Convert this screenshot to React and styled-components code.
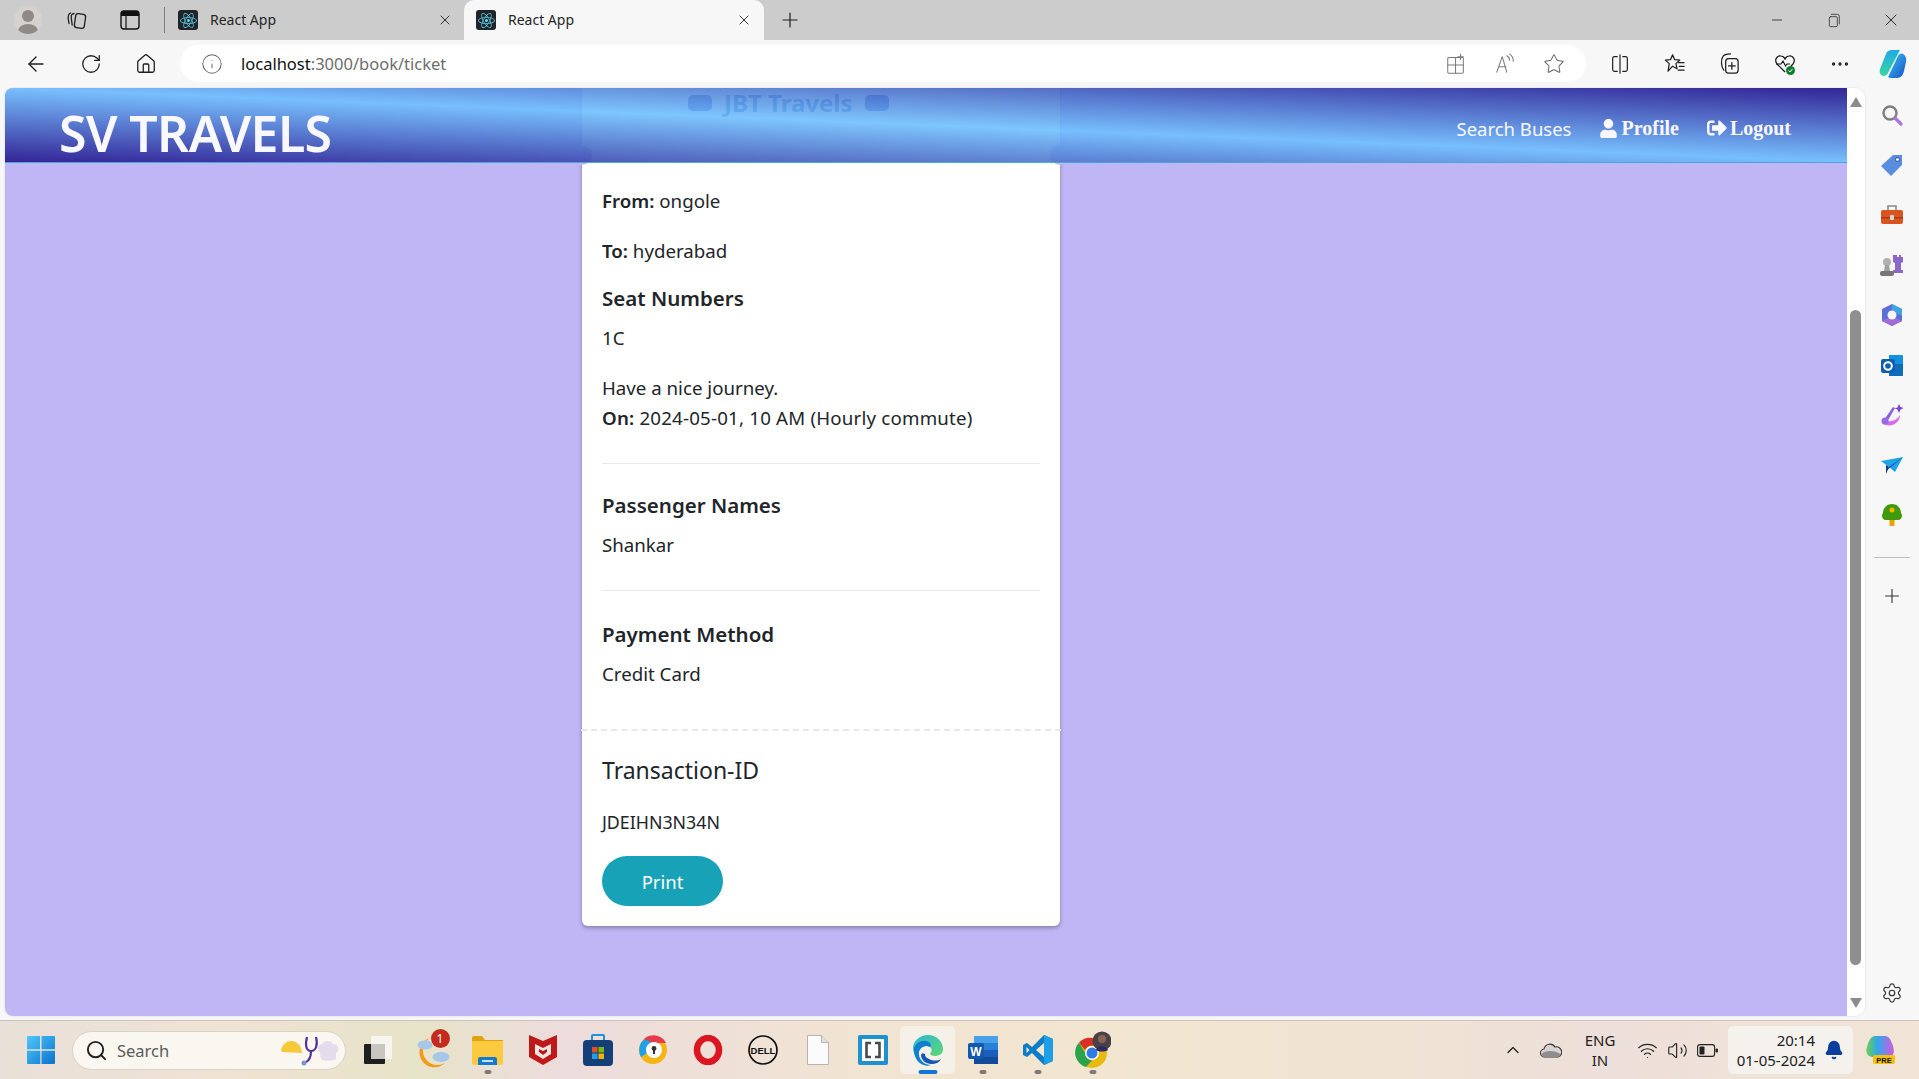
import styled, { createGlobalStyle } from "styled-components";
import { FaReact, FaUser, FaSignOutAlt } from "react-icons/fa";
import {
  ArrowLeft,
  RotateCw,
  Home,
  Info,
  Star,
  Plus,
  Minus,
  X,
  MoreHorizontal,
  Search as SearchGlyph,
  Settings,
  ChevronUp,
  Wifi,
  Volume2,
  Bell,
} from "lucide-react";

const SANS = `"Noto Sans", "Open Sans", sans-serif`;
const PAGE_BG = "#c0b6f5";

const Global = createGlobalStyle`
  html, body { margin: 0; padding: 0; overflow: hidden; }
  body { font-family: ${SANS}; color: #212529; background: #f7f7f7; }
  * { box-sizing: border-box; }
`;

const Screen = styled.div`
  width: 1919px;
  height: 1079px;
  display: flex;
  flex-direction: column;
  overflow: hidden;
`;

/* browser chrome */
const TabStrip = styled.div`
  height: 40px;
  background: #cccccc;
  display: flex;
  align-items: center;
  padding-left: 6px;
`;
const Slot = styled.div`
  width: ${(p) => p.$w || 55}px;
  height: 36px;
  flex: none;
  display: flex;
  align-items: center;
  justify-content: center;
  color: ${(p) => p.$color || "#1f1f1f"};
`;
const Avatar = styled.div`
  width: 28px;
  height: 28px;
  border-radius: 50%;
  background: #d6d3cf;
  position: relative;
  overflow: hidden;
  &::before {
    content: "";
    position: absolute;
    left: 8px;
    top: 4px;
    width: 12px;
    height: 12px;
    border-radius: 50%;
    background: #8f8a85;
  }
  &::after {
    content: "";
    position: absolute;
    left: 4px;
    top: 18px;
    width: 20px;
    height: 14px;
    border-radius: 50%;
    background: #8f8a85;
  }
`;
const StripDivider = styled.div`
  width: 1px;
  height: 26px;
  background: #7d7d7d;
  margin: 0 6px 0 7px;
`;
const Tab = styled.div`
  width: ${(p) => p.$w}px;
  height: 40px;
  flex: none;
  display: flex;
  align-items: center;
  padding: 0 ${(p) => (p.$active ? 12 : 11)}px 0 ${(p) => (p.$active ? 12 : 7)}px;
  background: ${(p) => (p.$active ? "#f7f7f7" : "transparent")};
  border-radius: 10px 10px 0 0;
  font-size: 14px;
  color: #262626;
`;
const Favicon = styled.div`
  width: 20px;
  height: 20px;
  border-radius: 3px;
  background: #20232a;
  color: #5fd3ea;
  display: flex;
  align-items: center;
  justify-content: center;
  margin-right: 12px;
  font-size: 17px;
`;
const TabTitle = styled.span`
  flex: 1;
  margin-top: -2px;
`;
const WindowControls = styled.div`
  margin-left: auto;
  display: flex;
`;
const Toolbar = styled.div`
  height: 48px;
  background: #f7f7f7;
  display: flex;
  align-items: center;
  padding: 0 0 1px 8px;
`;
const AddressBar = styled.div`
  width: 1406px;
  height: 37px;
  margin: 0 6px 0 7px;
  flex: none;
  background: #fff;
  border-radius: 19px;
  display: flex;
  align-items: center;
  padding: 0 8px 0 21px;
  font-size: 16.5px;
`;
const Url = styled.div`
  margin-left: 18px;
  color: #6e6e6e;
  flex: 1;
  b {
    font-weight: 400;
    color: #111;
  }
`;

/* viewport */
const Main = styled.div`
  height: 932px;
  display: flex;
  background: #f7f7f7;
`;
const Frame = styled.div`
  flex: 1;
  height: 928px;
  margin-left: 5px;
  display: flex;
  border-radius: 8px 10px 10px 8px;
  overflow: hidden;
  box-shadow: 0 0 2px rgba(0, 0, 0, 0.15);
`;
const PageView = styled.div`
  flex: 1;
  position: relative;
  background: ${PAGE_BG};
  padding-left: 577px;
  overflow: hidden;
`;
const NavHeader = styled.header`
  position: absolute;
  left: 0;
  right: 0;
  top: 0;
  height: 75px;
  display: flex;
  align-items: center;
  padding: 0 56px 0 54px;
  z-index: 2;
  opacity: 0.9;
  color: #fff;
  background: linear-gradient(to top right, #24158c, #70c0ff, #24158c);
  border-bottom: 1px solid #38a6cf;
`;
const Brand = styled.div`
  font-size: 50px;
  font-weight: 600;
  letter-spacing: -0.6px;
  line-height: 1;
  margin-top: 15px;
`;
const Nav = styled.nav`
  margin-left: auto;
  display: flex;
  align-items: center;
  gap: 28px;
  position: relative;
  top: 3px;
`;
const PlainLink = styled.span`
  font-size: 18.5px;
`;
const SerifLink = styled.span`
  font-family: "Liberation Serif", serif;
  font-weight: 700;
  font-size: 20px;
  display: flex;
  align-items: center;
  gap: 3px;
`;
const Card = styled.div`
  width: 478px;
  height: 838px;
  background: #fff;
  position: relative;
  border-radius: 0 0 6px 6px;
  box-shadow: 0 2px 4px rgba(0, 0, 0, 0.3);
  &::before,
  &::after {
    content: "";
    position: absolute;
    top: 57px;
    width: 20px;
    height: 20px;
    border-radius: 50%;
    background: ${PAGE_BG};
  }
  &::before {
    left: -10px;
  }
  &::after {
    right: -10px;
  }
`;
const CardTitle = styled.div`
  height: 98px;
  padding: 1px 0 0 106px;
  display: flex;
  gap: 12px;
  align-items: flex-start;
  font-size: 24px;
  line-height: 28px;
  font-weight: 700;
  color: #0a4aa8;
  white-space: nowrap;
`;
const BusBlob = styled.span`
  width: 24px;
  height: 16px;
  margin-top: 6px;
  border-radius: 5px;
  background: repeating-linear-gradient(180deg, #1d1a9c 0 3px, #2420a6 3px 5px);
`;
const Section = styled.section`
  margin: 0 20px;
  padding-bottom: ${(p) => p.$pb ?? 30}px;
  border-bottom: ${(p) => (p.$line ? "1px solid #e9e9e9" : "none")};
  margin-bottom: ${(p) => p.$mb ?? 0}px;
`;
const Text = styled.p`
  margin: 0 0 ${(p) => p.$mb ?? 20}px;
  font-size: 18.7px;
  line-height: 30px;
  letter-spacing: ${(p) => p.$spread ?? 0}px;
  b {
    font-weight: 600;
  }
`;
const SubHead = styled.h5`
  margin: 0 0 13px;
  font-size: 20.5px;
  line-height: 24px;
  font-weight: 600;
`;
const TearLine = styled.div`
  border-top: 2px dashed #e8e8e8;
  margin: 0 -1px;
`;
const Receipt = styled.div`
  padding: 25px 20px 0;
`;
const TxHead = styled.h4`
  margin: 0 0 23px;
  font-size: 23px;
  line-height: 28px;
  font-weight: 400;
`;
const TxId = styled.div`
  font-size: 17.8px;
  line-height: 30px;
  margin-bottom: 19px;
`;
const PrintButton = styled.button`
  width: 121px;
  height: 50px;
  border: none;
  border-radius: 25px;
  background: #17a2b8;
  color: #fff;
  font-family: ${SANS};
  font-size: 18.5px;
`;
const Scrollbar = styled.div`
  width: 18px;
  flex: none;
  background: #fff;
  display: flex;
  flex-direction: column;
  align-items: center;
  padding: 9px 0 8px;
`;
const Arrow = styled.div`
  width: 0;
  height: 0;
  border-left: 6.5px solid transparent;
  border-right: 6.5px solid transparent;
  ${(p) => (p.$down ? "border-top" : "border-bottom")}: 10px solid #8c8c8c;
`;
const Thumb = styled.div`
  width: 11px;
  height: 655px;
  margin-top: 203px;
  margin-left: -2px;
  border-radius: 6px;
  background: #8f8f8f;
`;
const ArrowDown = styled(Arrow)`
  margin-top: auto;
`;

/* right sidebar */
const Sidebar = styled.aside`
  width: 54px;
  flex: none;
  display: flex;
  flex-direction: column;
  align-items: center;
  padding: 2px 0;
`;
const SideItem = styled.div`
  width: 53px;
  height: ${(p) => p.$h || 50}px;
  flex: none;
  display: flex;
  align-items: center;
  justify-content: center;
  margin-top: ${(p) => (p.$push ? "auto" : "0")};
  color: #333;
`;
const SideRule = styled.div`
  width: 36px;
  height: 1px;
  background: #bdbdbd;
  margin: 17px 0 13px;
`;

/* windows taskbar */
const Taskbar = styled.div`
  height: 59px;
  flex: none;
  border-top: 1px solid #c8c3bb;
  background: linear-gradient(90deg, #e9e0d9 0%, #efe3d3 12%, #e7e3c8 22%, #ecdcdc 29%, #f1e4d2 45%, #f1e6cf 60%, #eee3d4 75%, #eddfda 83%, #f0e5d6 100%);
  display: flex;
  align-items: center;
  padding-left: 13px;
`;
const TaskItem = styled.div`
  width: 55px;
  height: 48px;
  flex: none;
  position: relative;
  display: flex;
  align-items: center;
  justify-content: center;
  border-radius: 5px;
  background: ${(p) => (p.$active ? "#f5f1e8" : "transparent")};
  &::after {
    content: ${(p) => (p.$dot || p.$active ? '""' : "none")};
    position: absolute;
    bottom: 0;
    left: 50%;
    transform: translateX(-50%);
    width: ${(p) => (p.$active ? 19 : 7)}px;
    height: 4px;
    border-radius: 2px;
    background: ${(p) => (p.$active ? "#0f78d4" : "#7d7a75")};
  }
`;
const SearchBox = styled.div`
  width: 274px;
  height: 39px;
  margin: 0 4px;
  flex: none;
  border-radius: 20px;
  background: #faf6f0;
  border: 1px solid #d8d2c8;
  display: flex;
  align-items: center;
  padding-left: 12px;
  gap: 9px;
  font-size: 16.5px;
  color: #5b5b5b;
  svg:last-child {
    margin-left: auto;
    margin-right: 3px;
  }
`;
const Tray = styled.div`
  margin-left: auto;
  display: flex;
  align-items: center;
  padding-right: 19px;
`;
const Lang = styled.div`
  width: 54px;
  text-align: center;
  font-size: 15px;
  line-height: 20px;
  color: #222;
  margin: 0 5px 0 0;
`;
const TrayIcon = styled.div`
  width: ${(p) => p.$w || 30}px;
  display: flex;
  justify-content: center;
  color: #222;
`;
const Clock = styled.div`
  width: 125px;
  height: 48px;
  margin: 0 0 0 6px;
  border-radius: 5px;
  background: #f5f1ec;
  display: flex;
  align-items: center;
  justify-content: flex-end;
  padding-right: 9px;
  gap: 9px;
  font-size: 15px;
  line-height: 20px;
  text-align: right;
  color: #222;
`;
const CopilotSlot = styled.div`
  margin-left: 9px;
  width: 38px;
  display: flex;
  justify-content: center;
`;
const DellText = styled.text`
  font-family: "Liberation Sans", sans-serif;
  font-weight: 700;
`;
const WeatherBox = styled.div`
  position: relative;
  width: 34px;
  height: 38px;
`;
const Badge = styled.span`
  position: absolute;
  right: 0;
  top: -2px;
  width: 19px;
  height: 19px;
  border-radius: 50%;
  background: #c42b1c;
  color: #fff;
  font-size: 12px;
  line-height: 19px;
  text-align: center;
`;

const Line = ({ size = 20, children, color = "currentColor", sw = 1.3 }) => (
  <svg width={size} height={size} viewBox="0 0 24 24" fill="none" stroke={color} strokeWidth={sw} strokeLinecap="round" strokeLinejoin="round">
    {children}
  </svg>
);

const CollectionsIcon = () => (
  <Line size={24}>
    <rect x="10" y="6" width="10" height="14" rx="2.5" transform="rotate(8 15 13)" />
    <path d="M9 5.5C6 6 6 7.5 6.4 11l.8 6" />
    <path d="M5.5 5C3 6 3 8 3.2 10.5l.8 5" />
  </Line>
);
const SidebarTabIcon = () => (
  <svg width="20" height="20" viewBox="0 0 20 20">
    <rect x="1" y="1" width="18" height="18" rx="3" fill="none" stroke="#111" strokeWidth="1.4" />
    <path d="M1 4a3 3 0 0 1 3-3h12a3 3 0 0 1 3 3v2H1z" fill="#111" />
    <path d="M6 6v13" stroke="#111" strokeWidth="1.2" />
  </svg>
);
const RestoreIcon = () => (
  <Line size={16} sw={1.1}>
    <rect x="5" y="7" width="12" height="15" rx="2" />
    <path d="M8 3.5h9a3 3 0 0 1 3 3V18" />
  </Line>
);
const AppsIcon = () => (
  <Line size={22} sw={1.1} color="#7a7a7a">
    <rect x="3" y="5" width="17" height="17" rx="1" />
    <path d="M3 13h17M11.5 5v17M17 1v6M14 4h6" />
  </Line>
);
const ReadAloudIcon = () => (
  <Line size={22} sw={1.1} color="#7a7a7a">
    <path d="M3 21 9 4l5 17M5 15h8" />
    <path d="M14 3c2 1 3 3 3 5M17 1c3 2 4 5 4 8" />
  </Line>
);
const SplitIcon = () => (
  <Line size={22}>
    <path d="M9 4H6a2 2 0 0 0-2 2v12a2 2 0 0 0 2 2h3M15 4h3a2 2 0 0 1 2 2v12a2 2 0 0 1-2 2h-3M12 2v20" />
  </Line>
);
const FavListIcon = () => (
  <Line size={23}>
    <path d="m10 3 2.2 5 5.3.5-4 3.6 1.2 5.4L10 14.800 5.300 20l1.200-7.900-4-3.600 5.300-.5z" />
    <path d="M16 11h6M17 15h5M16 19h6" />
  </Line>
);
const CollectionAddIcon = () => (
  <Line size={23}>
    <rect x="8" y="7" width="13" height="15" rx="3" />
    <path d="M14.500 11v7M11 14.500h7" />
    <path d="M6 19C3 15 3 8 5 5c1-2 4-3 8-3" />
  </Line>
);
const HealthIcon = () => (
  <svg width="24" height="24" viewBox="0 0 24 24" fill="none">
    <path d="M12 20 4 12C1 8 4 3 8 4c2 0 3 1 4 3 1-2 2-3 4-3 4-1 7 4 4 8l-2 2" stroke="#111" strokeWidth="1.2" />
    <path d="M3 12h5l2-3 2.500 5 1.500-2h3" stroke="#111" strokeWidth="1.1" />
    <circle cx="17.500" cy="18.500" r="4.500" fill="#117c2f" />
    <path d="m15.500 18.500 1.500 1.500 2.500-3" stroke="#fff" strokeWidth="1" />
  </svg>
);
const CopilotIcon = () => (
  <svg width="28" height="30" viewBox="0 0 28 30">
    <defs>
      <linearGradient id="cp1" x1="0" y1="0" x2="0" y2="1">
        <stop offset="0" stopColor="#1fa9e6" />
        <stop offset="1" stopColor="#3ad6a3" />
      </linearGradient>
      <linearGradient id="cp2" x1="0" y1="0" x2="1" y2="1">
        <stop offset="0" stopColor="#3ec4f2" />
        <stop offset="1" stopColor="#1550c8" />
      </linearGradient>
    </defs>
    <path d="M7 5c1-3 3-4 6-4h8L10 22c-1 3-3 5-6 5-3-1-4-4-3-7z" fill="url(#cp1)" />
    <path d="M12 29c-3 0-3-1-2-3l9-19c1-2 3-3 5-2 2 1 4 4 3 8l-2 9c-1 4-3 7-7 7z" fill="url(#cp2)" />
  </svg>
);

const SideGlyph = ({ children }) => (
  <svg width="24" height="24" viewBox="0 0 24 24">
    {children}
  </svg>
);
const sideIcons = [
  <SideGlyph key="1">
    <circle cx="10" cy="10" r="6.500" fill="none" stroke="#7e7e7e" strokeWidth="2.400" />
    <path d="m15 15 6 6" stroke="#a877d8" strokeWidth="3.200" strokeLinecap="round" />
  </SideGlyph>,
  <SideGlyph key="2">
    <path d="M13 2h9v10L11 23 1 13z" fill="#5a8de0" />
    <circle cx="17.500" cy="6.500" r="2" fill="#fff" stroke="#2a4fa0" />
  </SideGlyph>,
  <SideGlyph key="3">
    <path d="M8 7V3h8v4" fill="none" stroke="#8b8b8b" strokeWidth="1.600" />
    <rect x="1" y="7" width="22" height="14" rx="2" fill="#d9541e" />
    <rect x="1" y="14" width="22" height="1.500" fill="#a83c10" />
    <rect x="10" y="12" width="4" height="5" rx="1" fill="#d8d8d8" />
  </SideGlyph>,
  <SideGlyph key="4">
    <path d="M15 2h2v2h2V2h2v2h2v5l-2 1v7h2v3H13v-3h2v-7l-2-1V2z" fill="#8b68c8" />
    <circle cx="7" cy="9" r="4" fill="#b0b0b0" />
    <path d="M5 12h4l1 6H4z" fill="#a0a0a0" />
    <rect x="0" y="18" width="14" height="5" rx="2" fill="#767676" />
  </SideGlyph>,
  <SideGlyph key="5">
    <path d="M12 1 22 6v12l-10 5-10-5V6z" fill="#5a6fd8" />
    <path d="M12 1 22 6v7l-6-3c0-2-2-3-4-3z" fill="#3fa3e6" />
    <path d="M2 18l10 5 10-5-6-3c-2 2-6 2-8 0z" fill="#a26cd8" />
    <circle cx="12" cy="12" r="4.500" fill="#f7f7f7" />
  </SideGlyph>,
  <SideGlyph key="6">
    <path d="M9 2h13a1 1 0 0 1 1 1v19a1 1 0 0 1-1 1H9z" fill="#1490df" />
    <path d="M9 11 23 11v11a1 1 0 0 1-1 1H9z" fill="#0f6cbd" />
    <rect x="1" y="6" width="14" height="14" rx="2" fill="#0a5fb0" />
    <circle cx="8" cy="13" r="3.800" fill="none" stroke="#fff" strokeWidth="2" />
  </SideGlyph>,
  <SideGlyph key="7">
    <path d="M3 21c8 4 17-1 17-9-3 5-8 7-12 6z" fill="#d96ae8" />
    <path d="M4 17 13 4l2 1L7 19z" fill="#8a5fe0" />
    <circle cx="5" cy="18" r="3.500" fill="#9a6ae8" />
    <path d="m19 1 1.500 3 3 1-3 1.500L19 10l-1.500-3.500-3-1 3-1z" fill="#7a3fe0" />
  </SideGlyph>,
  <SideGlyph key="8">
    <path d="M1 8 23 4 15 19 9 14z" fill="#22a3e8" />
    <path d="M9 14 23 4 6 18z" fill="#0b4fa0" />
    <path d="M6 12 9 14l-3 7z" fill="#123a80" />
  </SideGlyph>,
  <SideGlyph key="9">
    <path d="M12 1c6 0 9 5 9 9 2 2 1 7-3 7H6c-4 0-5-5-3-7 0-4 3-9 9-9z" fill="#3f9b0b" />
    <rect x="9.500" y="17" width="5" height="6" fill="#e8a400" />
    <circle cx="12" cy="7" r="2.500" fill="#f5b400" />
  </SideGlyph>,
];

const WindowsLogo = () => (
  <svg width="30" height="30" viewBox="0 0 30 30">
    <defs>
      <linearGradient id="win" x1="0" y1="0" x2="1" y2="1">
        <stop offset="0" stopColor="#4fc8fa" />
        <stop offset="1" stopColor="#0a72cf" />
      </linearGradient>
    </defs>
    <path d="M1 2a1 1 0 0 1 1-1h12v13.300H1zM15.500 1H28a1 1 0 0 1 1 1v12.300H15.500zM1 15.700h13.300V29H2a1 1 0 0 1-1-1zM15.500 15.700H29V28a1 1 0 0 1-1 1H15.500z" fill="url(#win)" />
  </svg>
);
const SearchDoodle = () => (
  <svg width="62" height="34" viewBox="0 0 62 34">
    <path d="M1 17C3 7 16 4 21 15l1 5-20-1z" fill="#f4c93a" />
    <path d="M27 4c-2 8-1 14 4 14s7-6 5-14" fill="none" stroke="#55329a" strokeWidth="2.200" />
    <path d="M31 18c0 6-1 9-5 11" fill="none" stroke="#55329a" strokeWidth="2.200" />
    <circle cx="24" cy="30" r="2.500" fill="#7d95c8" />
    <path d="M40 20c-3-3-3-8 2-9 2-4 9-4 11 0 6 0 7 7 3 9v6c-4 2-12 2-15 0z" fill="#e4dcec" />
  </svg>
);
const TaskViewIcon = () => (
  <svg width="30" height="30" viewBox="0 0 30 30">
    <rect x="8" y="1" width="21" height="23" rx="1" fill="#f7f5f0" />
    <rect x="1" y="9" width="21" height="20" rx="1" fill="#1f1f1f" />
    <rect x="8" y="9" width="14" height="15" fill="#c9c6c2" />
  </svg>
);
const WeatherIcon = () => (
  <WeatherBox>
    <svg width="34" height="38" viewBox="0 0 34 38">
      <path d="M14 7A15 15 0 1 0 29 32 13 13 0 0 1 14 7z" fill="#f09a17" />
      <ellipse cx="9" cy="14" rx="7.500" ry="4.500" fill="#a6c6ea" />
      <ellipse cx="25" cy="26" rx="8.500" ry="5" fill="#a6c6ea" />
    </svg>
    <Badge>1</Badge>
  </WeatherBox>
);
const FolderIcon = () => (
  <svg width="31" height="30" viewBox="0 0 31 30">
    <path d="M0 3a2 2 0 0 1 2-2h8l3 4h18v4H0z" fill="#e0a210" />
    <path d="M0 6h31v22a2 2 0 0 1-2 2H2a2 2 0 0 1-2-2z" fill="#fcca3f" />
    <path d="M6 24a2 2 0 0 1 2-2h15a2 2 0 0 1 2 2v6H6z" fill="#1779c9" />
    <rect x="10" y="25" width="11" height="2" fill="#bfe0fa" />
  </svg>
);
const McAfeeIcon = () => (
  <svg width="28" height="30" viewBox="0 0 28 30">
    <path d="M0 0 14 6 28 0v22L14 30 0 22z" fill="#c01818" />
    <path d="M6 9 14 13l8-4v10l-8 5-8-5z" fill="#ece6e0" />
    <path d="M10 14l4 2 4-2v3l-4 3-4-3z" fill="#c01818" />
  </svg>
);
const StoreIcon = () => (
  <svg width="30" height="32" viewBox="0 0 30 32">
    <path d="M9 6V2a1 1 0 0 1 1-1h10a1 1 0 0 1 1 1v4" fill="none" stroke="#1f8fd8" strokeWidth="2" />
    <rect x="0" y="6" width="30" height="26" rx="4" fill="#143f78" />
    <rect x="9" y="13" width="5.500" height="5.500" fill="#e8501f" />
    <rect x="15.500" y="13" width="5.500" height="5.500" fill="#7fb900" />
    <rect x="9" y="19.500" width="5.500" height="5.500" fill="#1fa0e8" />
    <rect x="15.500" y="19.500" width="5.500" height="5.500" fill="#f5b400" />
  </svg>
);
const BraveLikeIcon = () => (
  <svg width="30" height="30" viewBox="0 0 30 30">
    <circle cx="15" cy="15" r="14" fill="#f5b417" />
    <path d="M15 1A14 14 0 0 0 3 22l6-4a7 7 0 0 1 6-10h13A14 14 0 0 0 15 1z" fill="#1fa0e8" />
    <path d="M6 4A14 14 0 0 1 28 8H15z" fill="#e83a4a" />
    <circle cx="16" cy="15" r="8" fill="#fff" />
    <circle cx="16" cy="13.500" r="2.400" fill="#333" />
    <rect x="15" y="14" width="2" height="5" fill="#333" />
  </svg>
);
const OperaIcon = () => (
  <svg width="30" height="30" viewBox="0 0 30 30">
    <ellipse cx="15" cy="15" rx="11" ry="12" fill="none" stroke="#dc1522" strokeWidth="6.500" />
  </svg>
);
const DellIcon = () => (
  <svg width="30" height="30" viewBox="0 0 30 30">
    <circle cx="15" cy="15" r="14" fill="none" stroke="#111" strokeWidth="1.700" />
    <DellText x="15" y="18.500" fontSize="9.500" textAnchor="middle" fill="#111">DELL</DellText>
  </svg>
);
const FileIcon = () => (
  <svg width="22" height="30" viewBox="0 0 22 30">
    <path d="M.5.500h14l7 7v22H.5z" fill="#fbfbfb" stroke="#b8b4ae" />
    <path d="M14.500.500v7h7" fill="#e4e2de" stroke="#b8b4ae" />
  </svg>
);
const BracketsIcon = () => (
  <svg width="30" height="30" viewBox="0 0 30 30">
    <rect width="30" height="30" rx="2" fill="#1d92cf" />
    <rect x="4" y="4" width="22" height="22" fill="#fff" />
    <path d="M13 8H8.500v14H13M17 8h4.500v14H17" fill="none" stroke="#4a4a4a" strokeWidth="2.600" />
  </svg>
);
const EdgeIcon = () => (
  <svg width="30" height="31" viewBox="0 0 30 31">
    <defs>
      <linearGradient id="edgeA" x1="0" y1="0" x2="1" y2="1">
        <stop offset="0" stopColor="#2ab7d8" />
        <stop offset="1" stopColor="#64d86c" />
      </linearGradient>
    </defs>
    <path d="M15 0c9 0 15 7 15 14 0 5-4 7-8 7-3 0-5-1-5-3 3-1 2-7-3-7-7 0-10 7-8 13-5-3-6-9-6-11C0 6 7 0 15 0z" fill="url(#edgeA)" />
    <path d="M1 13c2-5 7-8 12-7 5 1 6 5 4 6-6-3-12 1-11 8 1 6 6 10 12 10-9 3-18-5-17-17z" fill="#0f7fd0" />
    <path d="M8 20c0 5 5 9 10 9s9-2 10-5c-3 2-8 2-12 0-3-1-4-3-4-5-2-1-3-1-4 1z" fill="#1558b0" />
  </svg>
);
const WordIcon = () => (
  <svg width="30" height="30" viewBox="0 0 30 30">
    <rect x="6" y="1" width="24" height="28" rx="2" fill="#2a7fd8" />
    <rect x="6" y="1" width="24" height="7" fill="#48a0ea" />
    <rect x="6" y="15" width="24" height="7" fill="#1a5fbc" />
    <rect x="6" y="22" width="24" height="7" fill="#134a9c" />
    <rect x="0" y="8" width="16" height="16" rx="2" fill="#1458b0" />
    <text x="8" y="20.500" fontSize="12" fontWeight="700" textAnchor="middle" fill="#fff" fontFamily="Liberation Sans, sans-serif">W</text>
  </svg>
);
const VsCodeIcon = () => (
  <svg width="30" height="30" viewBox="0 0 30 30">
    <path d="M21 0 30 4v22l-9 4L9 18l-5 4-4-2v-10l4-2 5 4z" fill="#0a7cc8" />
    <path d="M21 0 30 4v22l-9 4z" fill="#1f9ee8" />
    <path d="m21 8-8 7 8 7z" fill="#f1e6d2" />
    <path d="M3.500 12 6.500 15l-3 3z" fill="#f1e6d2" />
  </svg>
);
const ChromeIcon = () => (
  <svg width="36" height="38" viewBox="-2 0 36 38">
    <circle cx="15" cy="22" r="15" fill="#e8b90f" />
    <path d="M15 7a15 15 0 0 1 13 7.500H15a7.500 7.500 0 0 0-7 4.500L2 11.500A15 15 0 0 1 15 7z" fill="#d93025" />
    <path d="M2 11.500 9 23.500a7 7 0 0 0 6 6L9 36A15 15 0 0 1 2 11.500z" fill="#2ba24c" />
    <circle cx="15" cy="22" r="7" fill="#fff" />
    <circle cx="15" cy="22" r="5.500" fill="#2f7be8" />
    <circle cx="25" cy="10" r="9.500" fill="#4a4048" />
    <path d="M19 19c1-5 11-5 12 0-3 2-9 2-12 0z" fill="#2c2a5c" />
    <circle cx="25" cy="8" r="4" fill="#8a6652" />
  </svg>
);
const CloudIcon = () => (
  <svg width="22" height="15" viewBox="0 0 22 15">
    <path d="M5 14a4 4 0 0 1-1-8 6 6 0 0 1 11-2 5 5 0 0 1 3 10z" fill="#d8d4cf" stroke="#333" strokeWidth="1.100" />
    <path d="M1.500 11c3-4 13-4 19 0a3 3 0 0 1-2.500 3H5a4 4 0 0 1-3.500-3z" fill="#8e8e8e" />
  </svg>
);
const BatteryIcon = () => (
  <svg width="21" height="13" viewBox="0 0 21 13">
    <rect x=".6" y=".6" width="17" height="11.800" rx="2.500" fill="none" stroke="#222" strokeWidth="1.100" />
    <rect x="2.500" y="2.500" width="5" height="8" rx="1" fill="#222" />
    <rect x="18.500" y="4.500" width="2.400" height="4" rx="1" fill="#222" />
  </svg>
);
const CopilotPreIcon = () => (
  <svg width="30" height="30" viewBox="0 0 30 30">
    <defs>
      <linearGradient id="pre" x1="0" y1="0" x2="1" y2="0">
        <stop offset="0" stopColor="#6fcf4a" />
        <stop offset=".4" stopColor="#2fa8ea" />
        <stop offset="1" stopColor="#d05ae0" />
      </linearGradient>
    </defs>
    <path d="M9 1h10c4 0 6 4 8 10 2 7 0 11-4 11H7C2 22-1 18 1 12 3 5 5 1 9 1z" fill="url(#pre)" />
    <rect x="7" y="20" width="22" height="9" rx="2" fill="#f4c20d" />
    <text x="18" y="27.500" fontSize="7.500" fontWeight="700" textAnchor="middle" fill="#111" fontFamily="Liberation Sans, sans-serif">PRE</text>
  </svg>
);

const taskItems = [
  { icon: <TaskViewIcon /> },
  { icon: <WeatherIcon /> },
  { icon: <FolderIcon />, dot: true },
  { icon: <McAfeeIcon /> },
  { icon: <StoreIcon /> },
  { icon: <BraveLikeIcon /> },
  { icon: <OperaIcon /> },
  { icon: <DellIcon /> },
  { icon: <FileIcon /> },
  { icon: <BracketsIcon /> },
  { icon: <EdgeIcon />, active: true },
  { icon: <WordIcon />, dot: true },
  { icon: <VsCodeIcon />, dot: true },
  { icon: <ChromeIcon />, dot: true },
];

function BrowserTab({ active, width }) {
  return (
    <Tab $active={active} $w={width}>
      <Favicon>
        <FaReact />
      </Favicon>
      <TabTitle>React App</TabTitle>
      <X size={16} strokeWidth={1.4} />
    </Tab>
  );
}

export default function App() {
  return (
    <Screen>
      <Global />
      <TabStrip>
        <Slot $w={44}>
          <Avatar />
        </Slot>
        <Slot $w={53}>
          <CollectionsIcon />
        </Slot>
        <Slot $w={54}>
          <SidebarTabIcon />
        </Slot>
        <StripDivider />
        <BrowserTab width={293} />
        <BrowserTab active width={300} />
        <Slot $w={52}>
          <Plus size={24} strokeWidth={1.2} />
        </Slot>
        <WindowControls>
          <Slot $w={57}>
            <Minus size={16} strokeWidth={1.2} />
          </Slot>
          <Slot $w={58}>
            <RestoreIcon />
          </Slot>
          <Slot $w={56}>
            <X size={20} strokeWidth={1.1} />
          </Slot>
        </WindowControls>
      </TabStrip>

      <Toolbar>
        <Slot>
          <ArrowLeft size={24} strokeWidth={1.4} />
        </Slot>
        <Slot>
          <RotateCw size={22} strokeWidth={1.4} />
        </Slot>
        <Slot>
          <Home size={22} strokeWidth={1.4} />
        </Slot>
        <AddressBar>
          <Info size={22} strokeWidth={1.1} color="#666" />
          <Url>
            <b>localhost</b>:3000/book/ticket
          </Url>
          <Slot $w={49}>
            <AppsIcon />
          </Slot>
          <Slot $w={49}>
            <ReadAloudIcon />
          </Slot>
          <Slot $w={49} $color="#666">
            <Star size={22} strokeWidth={1.1} />
          </Slot>
        </AddressBar>
        <Slot>
          <SplitIcon />
        </Slot>
        <Slot>
          <FavListIcon />
        </Slot>
        <Slot>
          <CollectionAddIcon />
        </Slot>
        <Slot>
          <HealthIcon />
        </Slot>
        <Slot>
          <MoreHorizontal size={22} strokeWidth={1.6} />
        </Slot>
        <Slot $w={52}>
          <CopilotIcon />
        </Slot>
      </Toolbar>

      <Main>
        <Frame>
          <PageView>
            <NavHeader>
              <Brand>SV TRAVELS</Brand>
              <Nav>
                <PlainLink>Search Buses</PlainLink>
                <SerifLink>
                  <FaUser size={19} /> Profile
                </SerifLink>
                <SerifLink>
                  <FaSignOutAlt size={20} /> Logout
                </SerifLink>
              </Nav>
            </NavHeader>
            <Card>
              <CardTitle>
                <BusBlob />
                JBT Travels
                <BusBlob />
              </CardTitle>
              <Section $line $mb={29}>
                <Text>
                  <b>From:</b> ongole
                </Text>
                <Text>
                  <b>To:</b> hyderabad
                </Text>
                <SubHead>Seat Numbers</SubHead>
                <Text>1C</Text>
                <Text $mb={0}>Have a nice journey.</Text>
                <Text $mb={0} $spread={0.2}>
                  <b>On:</b> 2024-05-01, 10 AM (Hourly commute)
                </Text>
              </Section>
              <Section $line $mb={31}>
                <SubHead>Passenger Names</SubHead>
                <Text $mb={0}>Shankar</Text>
              </Section>
              <Section $pb={40}>
                <SubHead>Payment Method</SubHead>
                <Text $mb={0}>Credit Card</Text>
              </Section>
              <TearLine />
              <Receipt>
                <TxHead>Transaction-ID</TxHead>
                <TxId>JDEIHN3N34N</TxId>
                <PrintButton>Print</PrintButton>
              </Receipt>
            </Card>
          </PageView>
          <Scrollbar>
            <Arrow />
            <Thumb />
            <ArrowDown $down />
          </Scrollbar>
        </Frame>
        <Sidebar>
          {sideIcons.map((icon, i) => (
            <SideItem key={i}>{icon}</SideItem>
          ))}
          <SideRule />
          <SideItem $h={50}>
            <Plus size={22} strokeWidth={1.2} />
          </SideItem>
          <SideItem $push>
            <Settings size={22} strokeWidth={1.3} />
          </SideItem>
        </Sidebar>
      </Main>

      <Taskbar>
        <TaskItem>
          <WindowsLogo />
        </TaskItem>
        <SearchBox>
          <SearchGlyph size={23} strokeWidth={2} color="#222" />
          Search
          <SearchDoodle />
        </SearchBox>
        {taskItems.map((item, i) => (
          <TaskItem key={i} $dot={item.dot} $active={item.active}>
            {item.icon}
          </TaskItem>
        ))}
        <Tray>
          <TrayIcon $w={30}>
            <ChevronUp size={20} strokeWidth={1.6} />
          </TrayIcon>
          <TrayIcon $w={45}>
            <CloudIcon />
          </TrayIcon>
          <Lang>
            ENG
            <br />
            IN
          </Lang>
          <TrayIcon>
            <Wifi size={21} strokeWidth={1.4} />
          </TrayIcon>
          <TrayIcon>
            <Volume2 size={21} strokeWidth={1.3} />
          </TrayIcon>
          <TrayIcon>
            <BatteryIcon />
          </TrayIcon>
          <Clock>
            <div>
              20:14
              <br />
              01-05-2024
            </div>
            <Bell size={20} fill="#0b3f9c" color="#0b3f9c" />
          </Clock>
          <CopilotSlot>
            <CopilotPreIcon />
          </CopilotSlot>
        </Tray>
      </Taskbar>
    </Screen>
  );
}
